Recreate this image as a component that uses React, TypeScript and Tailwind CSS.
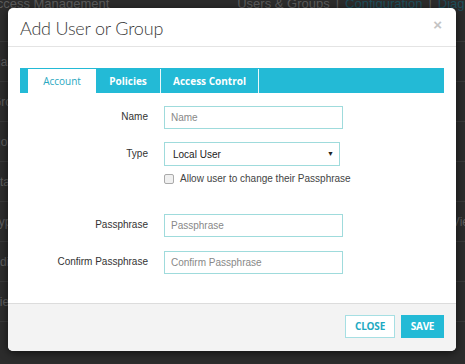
const sans = { fontFamily: '"Liberation Sans", Arial, sans-serif' };
const open = { fontFamily: '"Open Sans", "Noto Sans", sans-serif' };

const BackgroundPage = () => {
  return (
    <div className="flex flex-col w-full h-full" style={sans}>
      <div className="flex items-start justify-between h-[22px] text-[13px] leading-[14px] text-[#5c5c5c]">
        <span className="-ml-[12px] -mt-[3px]">Access Management</span>
        <span className="flex gap-[6px] -mr-[40px] -mt-[3px]">
          <span>Users &amp; Groups</span>
          <span>|</span>
          <span className="text-[#1f4f5c]">Configuration</span>
          <span>|</span>
          <span className="text-[#1f4f5c]">Diagnostics</span>
        </span>
      </div>
      <div className="h-[20px] border-b border-[#3b3b3b]" />
      {["Name", "Group", "Role", "Status", "Type", "Edit", "View"].map((t, i) => (
        <div
          key={i}
          className="h-[40px] border-b border-[#3a3a3a] flex items-center justify-between text-[12px] text-[#5e5e5e]"
        >
          <span className="-ml-[8px]">{t}</span>
          <span className="-mr-[4px]">{i === 4 ? "Vie" : ""}</span>
        </div>
      ))}
    </div>
  );
};

const Field = ({ label, placeholder }: { label: string; placeholder: string }) => {
  return (
    <div className="flex items-start">
      <label className="w-[128px] text-right text-[10px] text-[#333] pt-[3px]" style={sans}>
        {label}
      </label>
      <input
        placeholder={placeholder}
        className="ml-[16px] w-[179px] h-[23px] border border-[#9fdbdc] px-[6px] text-[10px] text-[#333] placeholder:text-[#888] outline-none bg-white"
        style={sans}
      />
    </div>
  );
};

const AddUserModal = () => {
  return (
    <div className="absolute left-[8px] top-[8px] w-[448px] h-[343px] bg-white rounded-[5px] shadow-[0_2px_8px_rgba(0,0,0,0.6)] flex flex-col overflow-hidden">
      <div className="h-[39px] border-b border-[#e4e4e4] flex items-center justify-between pl-[12px] pr-[14px]">
        <h2
          className="text-[18px] text-[#3a3a3a] font-light tracking-[-0.2px] pt-[2px]"
          style={{ fontFamily: 'Lato, "Open Sans", sans-serif' }}
        >
          Add User or Group
        </h2>
        <span className="text-[15px] font-bold text-[#c4c4c4] -mt-[4px]" style={sans}>
          ×
        </span>
      </div>

      <div className="flex-1 px-[12px] pt-[21px]">
        <div className="flex h-[25px] bg-[#23bad6] pl-[8px] pt-[1px]" style={open}>
          <div className="w-[68px] bg-white flex items-center justify-center text-[10px] text-[#2aa8bf]">
            Account
          </div>
          <div className="w-[65px] border-r border-[#e8f8fb] flex items-center justify-center text-[10px] font-bold text-white">
            Policies
          </div>
          <div className="w-[98px] border-r border-[#e8f8fb] flex items-center justify-center text-[10px] font-bold text-white">
            Access Control
          </div>
        </div>

        <div className="flex flex-col mt-[13px]">
          <Field label="Name" placeholder="Name" />

          <div className="flex items-start mt-[13px]">
            <label className="w-[128px] text-right text-[10px] text-[#333] pt-[4px]" style={sans}>
              Type
            </label>
            <div className="ml-[16px] flex flex-col">
              <div
                className="w-[176px] h-[24px] border border-[#9fdbdc] flex items-center justify-between pl-[8px] pr-[5px] text-[10px] text-[#222]"
                style={sans}
              >
                <span>Local User</span>
                <span className="text-[7px] text-[#222]">▼</span>
              </div>
              <div className="flex items-center mt-[5px]">
                <span className="w-[10px] h-[10px] rounded-[2px] border border-[#aaa] bg-[#f0f0f0]" />
                <span className="ml-[6px] text-[10px] text-[#444]" style={sans}>
                  Allow user to change their Passphrase
                </span>
              </div>
            </div>
          </div>

          <div className="mt-[28px]">
            <Field label="Passphrase" placeholder="Passphrase" />
          </div>
          <div className="mt-[14px]">
            <Field label="Confirm Passphrase" placeholder="Confirm Passphrase" />
          </div>
        </div>
      </div>

      <div
        className="h-[48px] border-t border-[#dcdcdc] bg-[#f3f3f3] flex items-start justify-end gap-[6px] pr-[12px] pt-[11px]"
        style={open}
      >
        <button className="w-[50px] h-[23px] border border-[#a6dfe3] bg-white text-[10px] font-bold text-[#1ea9c2] tracking-[-0.2px]">
          CLOSE
        </button>
        <button className="w-[43px] h-[23px] bg-[#23bad6] text-[10px] font-bold text-white tracking-[-0.3px]">
          SAVE
        </button>
      </div>
    </div>
  );
};

export default function App() {
  return (
    <div className="relative w-[465px] h-[364px] overflow-hidden bg-[#2c2c2c]">
      <BackgroundPage />
      <AddUserModal />
    </div>
  );
}
